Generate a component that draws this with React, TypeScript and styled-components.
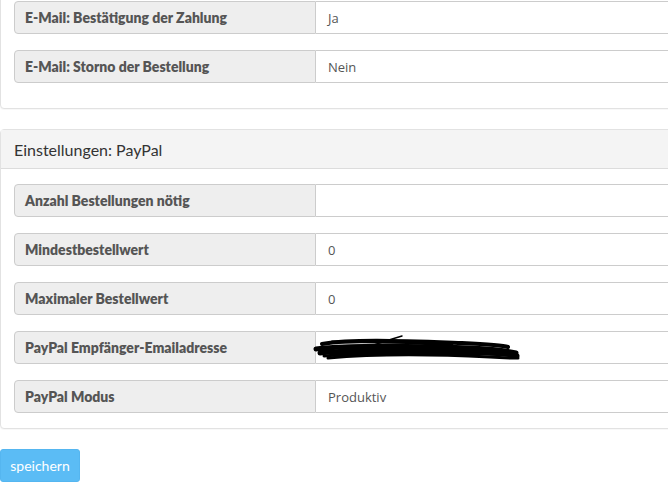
import React from 'react';
import styled, { createGlobalStyle } from 'styled-components';

const GlobalStyle = createGlobalStyle`
  html, body {
    margin: 0;
    padding: 0;
    background: #fff;
    overflow: hidden;
  }
  body {
    font-family: 'Lato', 'Open Sans', sans-serif;
    color: #555;
  }
`;

const Page = styled.div`
  width: 760px;
`;

const Panel = styled.div<{ $first?: boolean }>`
  border: 1px solid #e2e2e2;
  border-radius: 4px;
  background: #fff;
  margin-top: ${({ $first }) => ($first ? '-40px' : '0')};
  margin-bottom: 20px;
  box-shadow: 0 1px 1px rgba(0, 0, 0, 0.03);
`;

const PanelHeading = styled.div`
  background: #f4f4f4;
  border-bottom: 1px solid #dcdcdc;
  height: 38px;
  padding: 0 13px;
  display: flex;
  align-items: center;
  font-size: 16px;
  color: #333;
`;

const PanelBody = styled.div<{ $top: number; $bottom: number }>`
  padding: ${({ $top }) => $top}px 13px ${({ $bottom }) => $bottom}px;
  display: flex;
  flex-direction: column;
  gap: 16px;
`;

const InputGroup = styled.div`
  display: flex;
  height: 33px;
  box-sizing: border-box;
`;

const Label = styled.div`
  width: 302px;
  flex-shrink: 0;
  box-sizing: border-box;
  background: #eee;
  border: 1px solid #ccc;
  border-radius: 4px 0 0 4px;
  padding: 0 10px;
  display: flex;
  align-items: center;
  font-size: 14px;
  font-weight: 800;
  color: #555;
`;

const Value = styled.div`
  flex: 1;
  box-sizing: border-box;
  border: 1px solid #ccc;
  border-left: none;
  border-radius: 0 4px 4px 0;
  padding: 0 12px;
  display: flex;
  align-items: center;
  font-family: 'Open Sans', 'Liberation Sans', sans-serif;
  font-size: 13px;
  color: #555;
`;

const SaveButton = styled.button`
  background: #5bbcf5;
  border: 1px solid #55b6f0;
  border-radius: 3px;
  color: #fff;
  font-family: 'Lato', 'Open Sans', sans-serif;
  font-size: 14px;
  height: 33px;
  width: 80px;
  padding: 0;
  cursor: pointer;
`;

const Scribble = () => (
  <svg width="210" height="30" viewBox="0 0 210 30" style={{ marginLeft: -16 }}>
    <g fill="none" stroke="#000" strokeLinecap="round">
      <path d="M10 11 C40 6, 90 8, 150 10 C170 11, 190 12, 196 14" strokeWidth="4" />
      <path d="M4 16 C40 12, 100 13, 160 15 C180 16, 195 18, 204 20" strokeWidth="5" />
      <path d="M8 20 C50 16, 110 17, 170 19 C185 20, 198 21, 205 23" strokeWidth="5" />
      <path d="M16 25 C60 21, 120 21, 178 24 C190 25, 200 25, 206 25" strokeWidth="3" />
      <path d="M4 16 C20 21, 40 23, 70 21" strokeWidth="3" />
      <path d="M62 12 C70 9, 80 6, 90 3" strokeWidth="1.5" />
      <path d="M20 9 C60 8, 100 9, 140 12" strokeWidth="3" />
      <path d="M30 14 C80 12, 130 14, 190 18" strokeWidth="4" />
      <path d="M12 23 C60 19, 120 19, 200 22" strokeWidth="3" />
    </g>
  </svg>
);

type Row = { label: string; value: React.ReactNode };

const firstRows: Row[] = [
  { label: 'E-Mail: Bestätigung der Zahlung', value: 'Ja' },
  { label: 'E-Mail: Storno der Bestellung', value: 'Nein' },
];

const paypalRows: Row[] = [
  { label: 'Anzahl Bestellungen nötig', value: '' },
  { label: 'Mindestbestellwert', value: '0' },
  { label: 'Maximaler Bestellwert', value: '0' },
  { label: 'PayPal Empfänger-Emailadresse', value: <Scribble /> },
  { label: 'PayPal Modus', value: 'Produktiv' },
];

const Rows = ({ rows }: { rows: Row[] }) => (
  <>
    {rows.map((r) => (
      <InputGroup key={r.label}>
        <Label>{r.label}</Label>
        <Value>{r.value}</Value>
      </InputGroup>
    ))}
  </>
);

export default function App() {
  return (
    <Page>
      <GlobalStyle />
      <Panel $first>
        <PanelBody $top={40} $bottom={25}>
          <Rows rows={firstRows} />
        </PanelBody>
      </Panel>
      <Panel>
        <PanelHeading>Einstellungen: PayPal</PanelHeading>
        <PanelBody $top={15} $bottom={15}>
          <Rows rows={paypalRows} />
        </PanelBody>
      </Panel>
      <SaveButton>speichern</SaveButton>
    </Page>
  );
}
